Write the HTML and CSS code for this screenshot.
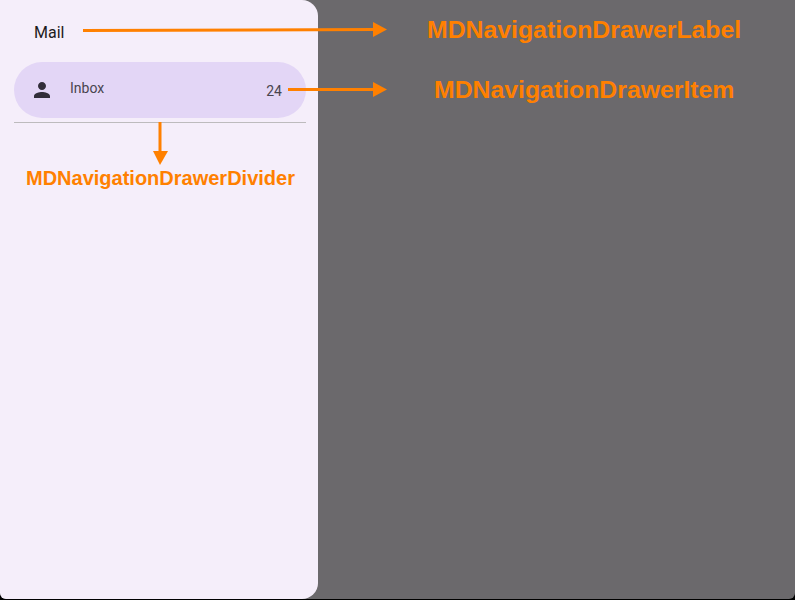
FILE: index.html
```html
<!DOCTYPE html>
<html>
<head>
    <title>MDNavigationDrawer</title>
    <link rel="stylesheet" href="styles.css">
</head>
<body>
    <div class="screen">
        <div class="drawer">
            <div class="drawer-label">Mail</div>
            <div class="drawer-item">
                <svg class="item-icon" width="24" height="24" viewBox="0 0 24 24"><path d="M12 12c2.21 0 4-1.79 4-4s-1.79-4-4-4-4 1.79-4 4 1.79 4 4 4zm0 2c-2.67 0-8 1.34-8 4v2h16v-2c0-2.66-5.33-4-8-4z"/></svg>
                <span class="item-text">Inbox</span>
                <span class="item-count">24</span>
            </div>
            <div class="drawer-divider"></div>
        </div>

        <!-- annotations -->
        <svg class="arrows" width="795" height="600" viewBox="0 0 795 600">
            <path class="arrow-line" d="M83 30.500 L374 29.500"/>
            <path class="arrow-head" d="M373 22 L387 29.500 L373 37z"/>
            <path class="arrow-line" d="M288 89.500 L374 89.500"/>
            <path class="arrow-head" d="M373 82 L387 89.500 L373 97z"/>
            <path class="arrow-line" d="M160 122 L160 153"/>
            <path class="arrow-head" d="M153 151 L160 165 L168 151z"/>
        </svg>
        <span class="note note-label">MDNavigationDrawerLabel</span>
        <span class="note note-item">MDNavigationDrawerItem</span>
        <span class="note note-divider">MDNavigationDrawerDivider</span>
    </div>
</body>
</html>
```

FILE: styles.css
```css
body {
    margin: 0;
    font-family: 'Roboto', sans-serif;
    background-color: #000000;
}

.screen {
    position: relative;
    width: 795px;
    height: 599px;
    background-color: #6b696c;
    border-radius: 0 0 6px 6px;
}

.drawer {
    box-sizing: border-box;
    width: 318px;
    height: 599px;
    padding: 0 12px 0 14px;
    background-color: #f5eefa;
    border-radius: 0 16px 16px 6px;
}

.drawer-label {
    height: 62px;
    padding: 23px 0 0 20px;
    box-sizing: border-box;
    font-size: 16px;
    line-height: 19px;
    color: #1d1b20;
}

.drawer-item {
    display: flex;
    align-items: center;
    height: 56px;
    padding: 0 24px 0 16px;
    border-radius: 28px;
    background-color: #e3d6f6;
    color: #49454f;
}

.item-icon {
    fill: #322e3a;
    flex-shrink: 0;
}

.item-text {
    margin: -4px 0 0 16px;
    font-size: 14px;
}

.item-count {
    margin: 1px 0 0 auto;
    font-size: 14px;
}

.drawer-divider {
    height: 1px;
    margin-top: 4px;
    background-color: #bdbbbd;
}

.arrows {
    position: absolute;
    top: 0;
    left: 0;
}

.arrow-line {
    fill: none;
    stroke: #ff8000;
    stroke-width: 3;
}

.arrow-head {
    fill: #ff8000;
}

.note {
    position: absolute;
    font-family: 'Liberation Sans', Arial, sans-serif;
    font-size: 24.8px;
    font-weight: bold;
    line-height: 28px;
    color: #ff8000;
    white-space: nowrap;
}

.note-label {
    top: 16px;
    left: 427px;
}

.note-item {
    top: 76px;
    left: 434px;
}

.note-divider {
    top: 164px;
    left: 26px;
    font-size: 20px;
}
```
